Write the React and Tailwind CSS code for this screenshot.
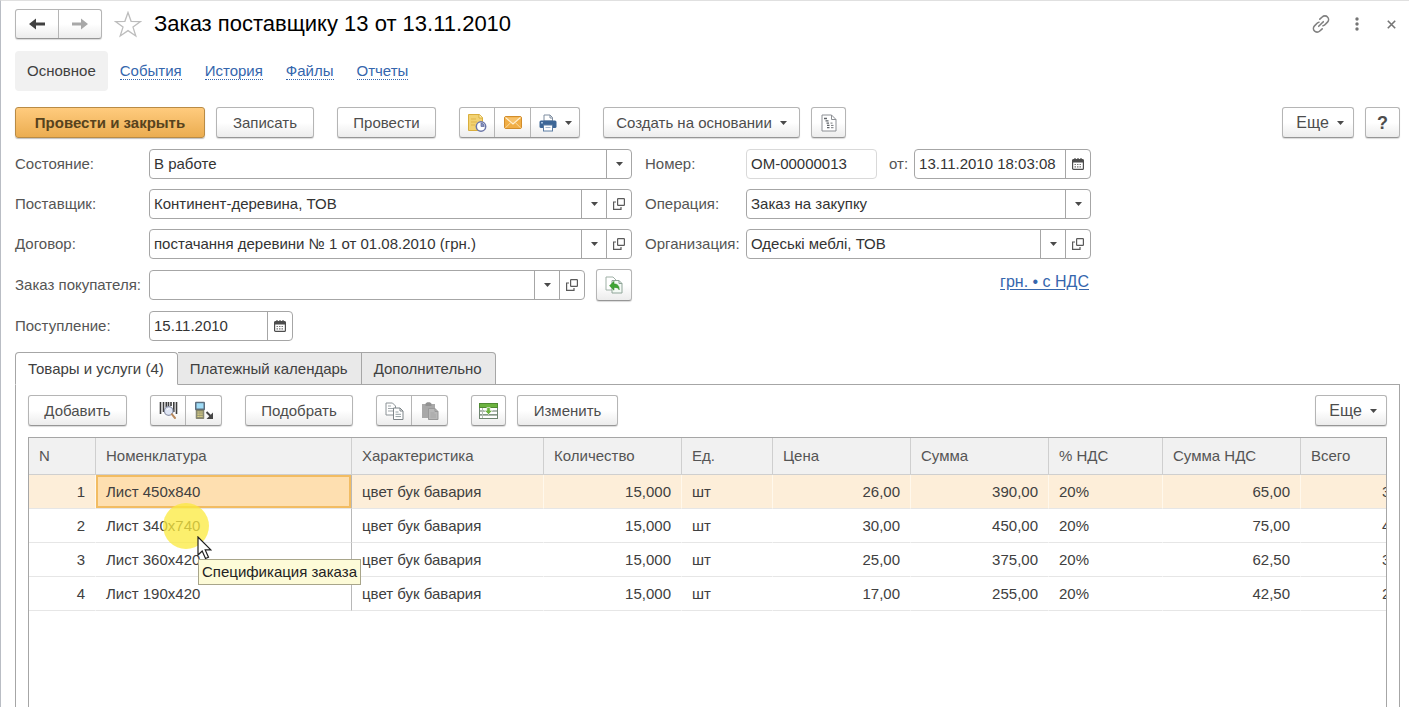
import React, { useState } from "react";
import clsx from "clsx";

const lines = [
  { name: "Лист 450x840", kind: "цвет бук бавария", qty: "15,000", unit: "шт", price: "26,00", sum: "390,00", vat: "20%", vatSum: "65,00", total: "390,00" },
  { name: "Лист 340x740", kind: "цвет бук бавария", qty: "15,000", unit: "шт", price: "30,00", sum: "450,00", vat: "20%", vatSum: "75,00", total: "450,00" },
  { name: "Лист 360x420", kind: "цвет бук бавария", qty: "15,000", unit: "шт", price: "25,00", sum: "375,00", vat: "20%", vatSum: "62,50", total: "375,00" },
  { name: "Лист 190x420", kind: "цвет бук бавария", qty: "15,000", unit: "шт", price: "17,00", sum: "255,00", vat: "20%", vatSum: "42,50", total: "255,00" },
];

const columns = [
  { key: "n", title: "N", width: "w-[67px]", right: true },
  { key: "name", title: "Номенклатура", width: "w-[256px]" },
  { key: "kind", title: "Характеристика", width: "w-[192px]" },
  { key: "qty", title: "Количество", width: "w-[138px]", right: true },
  { key: "unit", title: "Ед.", width: "w-[91px]" },
  { key: "price", title: "Цена", width: "w-[138px]", right: true },
  { key: "sum", title: "Сумма", width: "w-[138px]", right: true },
  { key: "vat", title: "% НДС", width: "w-[114px]" },
  { key: "vatSum", title: "Сумма НДС", width: "w-[138px]", right: true },
  { key: "total", title: "Всего", width: "w-[138px]", right: true },
];

const tabs = ["Товары и услуги (4)", "Платежный календарь", "Дополнительно"];

/* ---------- icons ---------- */

const Caret = () => (
  <svg width="7" height="4" viewBox="0 0 7 4" className="shrink-0">
    <path d="M0 0h7L3.5 4z" fill="#4a4a4a" />
  </svg>
);

const ArrowIcon = ({ color, flip }) => (
  <svg width="18" height="12" viewBox="0 0 18 12" className={flip ? "rotate-180" : ""}>
    <path d="M8 0.500L1 6l7 5.500V7.600H17V4.400H8z" fill={color} />
  </svg>
);

const StarIcon = () => (
  <svg width="28" height="27" viewBox="0 0 28 27">
    <path d="M14 1.500l3.100 8.800 9.400.2-7.500 5.600 2.800 8.900L14 19.600l-7.800 5.400L9 16.100 1.500 10.500l9.400-.2z" fill="#fff" stroke="#bdbdbd" strokeWidth="1.300" />
  </svg>
);

const LinkIcon = () => (
  <svg width="20" height="20" viewBox="0 0 20 20" fill="none" stroke="#808080" strokeWidth="1.600" strokeLinecap="round">
    <path d="M8.800 5.200l2.400-2.200c1.600-1.500 4-1.400 5.300 0 1.400 1.400 1.400 3.700 0 5.100l-2.600 2.700c-.6.6-1.200.9-1.900 1" />
    <path d="M11.200 14.800l-2.400 2.200c-1.600 1.500-4 1.400-5.300 0-1.400-1.400-1.400-3.700 0-5.100l2.600-2.700c.6-.6 1.200-.9 1.900-1" />
    <path d="M7.700 12.300l4.600-4.600" />
  </svg>
);

const DotsIcon = () => (
  <svg width="4" height="14" viewBox="0 0 4 14" fill="#757575">
    <circle cx="2" cy="2" r="1.700" />
    <circle cx="2" cy="7" r="1.700" />
    <circle cx="2" cy="12" r="1.700" />
  </svg>
);

const CloseIcon = () => (
  <svg width="9" height="9" viewBox="0 0 9 9" stroke="#757575" strokeWidth="1.600">
    <path d="M.8.8l7.400 7.400M8.200.8L.8 8.200" />
  </svg>
);

const DocClockIcon = () => (
  <svg width="20" height="20" viewBox="0 0 20 20">
    <path d="M1.500 1.500h11l3 3v13h-14z" fill="#f2d272" stroke="#d9ae3d" />
    <path d="M12 1.500v3.500h3.500" fill="#fff3c4" stroke="#d9ae3d" />
    <path d="M4 6h5M4 9h6M4 12h4" stroke="#e0b54a" />
    <circle cx="14" cy="13.500" r="4.700" fill="#fff" stroke="#6b76a8" strokeWidth="1.500" />
    <path d="M14 10v3.500h3.200A3.400 3.400 0 0 0 14 10z" fill="#8892bd" stroke="#5c689e" strokeWidth=".7" />
  </svg>
);

const MailIcon = () => (
  <svg width="18" height="13" viewBox="0 0 18 13">
    <rect x=".5" y=".5" width="17" height="12" rx="1.500" fill="#f1ae45" stroke="#d28d2b" />
    <path d="M1.500 1.500L9 8l7.500-6.500" fill="#f7c16a" stroke="#fff1d3" strokeWidth="1.100" />
    <path d="M1.500 11.800l5-5M16.500 11.800l-5-5" stroke="#fbdca4" />
  </svg>
);

const PrinterIcon = () => (
  <svg width="18" height="18" viewBox="0 0 18 18">
    <path d="M5 7V1h6l2.500 2.500V7z" fill="#fff" stroke="#7f8da0" />
    <path d="M11 1v3h2.500" fill="none" stroke="#7f8da0" />
    <rect x=".5" y="6.500" width="17" height="7.500" rx="1.500" fill="#3d6696" />
    <rect x="2" y="8" width="2" height="1.500" fill="#a9c3e0" />
    <rect x="4.500" y="11" width="9" height="6" fill="#fff" stroke="#5b7ca3" />
    <path d="M6.500 13.500h5" stroke="#a5b6cb" />
  </svg>
);

const ReportIcon = () => (
  <svg width="16" height="18" viewBox="0 0 16 18" fill="none">
    <path d="M1 1h9.500L15 5.500V17H1z" fill="#fff" stroke="#8c8f94" />
    <path d="M10.500 1v4.500H15" stroke="#8c8f94" />
    <path d="M3 4.500h3M4.500 6.800h3M5.500 9.100h2.500M6 11.400h2.500M6 13.700h2.500" stroke="#5f6368" strokeWidth="1.300" />
    <path d="M9.500 9.100h2M10 11.400h2.500M10 13.700h2.500" stroke="#74777b" />
  </svg>
);

const OpenIcon = () => (
  <svg width="12" height="12" viewBox="0 0 12 12" fill="none" stroke="#5a5a5a" strokeWidth="1.200">
    <rect x="4.600" y=".6" width="6.800" height="6.800" rx=".6" />
    <path d="M3 4H.6v7.400H8V9" />
  </svg>
);

const CalendarIcon = () => (
  <svg width="12" height="12" viewBox="0 0 12 12">
    <rect x=".6" y="1.600" width="10.800" height="9.800" rx="1" fill="#fff" stroke="#4d4d4d" strokeWidth="1.200" />
    <path d="M.6 1.600h10.800v3H.6z" fill="#4d4d4d" />
    <path d="M3 0v3M6 0v3M9 0v3" stroke="#4d4d4d" strokeWidth="1.200" />
    <path d="M2.500 6.500h7M2.500 8.800h7" stroke="#777" strokeWidth="1.200" strokeDasharray="1.500 1" />
  </svg>
);

const FillFromIcon = () => (
  <svg width="18" height="18" viewBox="0 0 18 18">
    <path d="M1 1h7l3 3v10H1z" fill="#fff" stroke="#9fb0a6" />
    <path d="M7 4.500h7l3 3V17H7z" fill="#f4faf5" stroke="#8fa598" />
    <path d="M14 4.500v3h3" fill="none" stroke="#8fa598" />
    <path d="M4.500 9.800l4.500-4.500v2.600c3.600 0 5.400 1.900 5.200 6-.8-1.900-2.300-2.600-5.200-2.500v2.800z" fill="#3fa535" stroke="#2c8425" strokeWidth=".5" />
  </svg>
);

const BarcodeIcon = () => (
  <svg width="19" height="19" viewBox="0 0 19 19">
    <path d="M1.500 1v12M4.500 1v10M7.300 1v5M9.500 1v4M12 1v4M14.800 1v10M17.500 1v12" stroke="#3c3c3c" strokeWidth="1.600" />
    <circle cx="9.700" cy="10" r="4.300" fill="#dfe6f5" stroke="#8d93a8" strokeWidth="1.200" />
    <path d="M8 9a2.200 2.200 0 0 1 2.500-1.300" fill="none" stroke="#fff" />
    <path d="M12.800 13.200l3.200 3.800" stroke="#b98a5d" strokeWidth="2" strokeLinecap="round" />
  </svg>
);

const TerminalIcon = () => (
  <svg width="20" height="19" viewBox="0 0 20 19">
    <rect x="1" y=".8" width="10" height="8.500" rx="1" fill="#5c6f80" />
    <rect x="2.500" y="2.200" width="7" height="5.300" fill="#9fdcf7" />
    <path d="M2.200 9h7.600v8.500H2.200z" fill="#8f8f72" stroke="#6c6c55" strokeWidth=".7" />
    <path d="M3.500 11h5M3.500 13.200h5M3.500 15.400h5" stroke="#f0e28a" strokeWidth="1.200" strokeDasharray="1.300 .6" />
    <path d="M12.500 11l4 4" stroke="#444" strokeWidth="2" />
    <path d="M19 11.500V18h-6.500z" fill="#444" />
  </svg>
);

const CopyIcon = () => (
  <svg width="19" height="18" viewBox="0 0 19 18">
    <path d="M1 1h6.500L10.500 4v9H1z" fill="#fff" stroke="#8b9296" />
    <path d="M3 4h3M3 6.500h5M3 9h5" stroke="#a0a7ab" />
    <path d="M8.500 6H15l3 3v8.500H8.500z" fill="#fff" stroke="#7d8488" />
    <path d="M15 6v3h3" fill="none" stroke="#7d8488" />
    <path d="M10.500 10h3M10.500 12.300h5.500M10.500 14.600h5.500" stroke="#94a0a4" />
  </svg>
);

const PasteIcon = () => (
  <svg width="18" height="18" viewBox="0 0 18 18">
    <path d="M1 2h13v14H1z" fill="#a8a8a8" />
    <path d="M4.500 2c0-2.200 6-2.200 6 0v2h-6z" fill="#929292" />
    <path d="M7.500 6.500H14l3 3v8H7.500z" fill="#b8b8b8" stroke="#999" />
    <path d="M14 6.500v3h3" fill="none" stroke="#999" />
    <path d="M9.500 11h4M9.500 13h5.500M9.500 15h5.500" stroke="#9f9f9f" strokeWidth=".7" />
  </svg>
);

const TableDownIcon = () => (
  <svg width="19" height="16" viewBox="0 0 19 16">
    <rect x=".5" y=".5" width="18" height="15" fill="#fff" stroke="#6f8571" />
    <rect x=".5" y=".5" width="18" height="4" fill="#6cb33f" stroke="#4f8a33" />
    <path d="M1 8h17M1 11.800h17" stroke="#5e7561" strokeWidth="1.200" />
    <path d="M3.500 5v10" stroke="#b4c0b5" />
    <path d="M7.800 4.500h3.400v3h2.300L9.500 11.500l-4-4h2.300z" fill="#6cb33f" stroke="#fff" strokeWidth=".6" />
  </svg>
);

const CursorIcon = () => (
  <svg width="15" height="24" viewBox="0 0 15 24">
    <path d="M1 1v18l4.200-4 3.300 7.500 3-1.300-3.300-7.300h5.600z" fill="#fff" stroke="#1f1f1f" strokeWidth="1.200" />
  </svg>
);

/* ---------- controls ---------- */

const face = "bg-gradient-to-b from-white from-50% to-[#ececec] border-[#b5b5b5] border-b-[#969696]";

const Button = ({ className, children, ...rest }) => (
  <button
    type="button"
    className={clsx("flex items-center justify-center rounded-[3px] border text-[#4d4d4d] shadow-[0_1px_1px_rgba(0,0,0,0.15)]", face, className)}
    {...rest}
  >
    {children}
  </button>
);

// several icon buttons glued into one frame
const ButtonGroup = ({ className, children }) => (
  <div className={clsx("flex divide-x divide-[#b5b5b5] rounded-[3px] border shadow-[0_1px_1px_rgba(0,0,0,0.15)]", face, className)}>
    {children}
  </div>
);

const GroupItem = ({ className, children, ...rest }) => (
  <button type="button" className={clsx("flex items-center justify-center", className || "w-[35px]")} {...rest}>
    {children}
  </button>
);

const Field = ({ id, value, buttons = [], pale, className }) => {
  const [text, setText] = useState(value);
  return (
    <div className={clsx("flex h-[30px] min-w-0 overflow-hidden rounded-[4px] border bg-white", pale ? "border-[#d9d9d9]" : "border-[#a6a6a6]", className)}>
      <input id={id} value={text} onChange={(e) => setText(e.target.value)} className="min-w-0 flex-1 pl-1 text-[#333] outline-none" />
      {buttons.map((b) => (
        <button key={b} type="button" aria-label={b} className="flex w-[25px] shrink-0 items-center justify-center border-l border-[#a6a6a6]">
          {b === "Выбрать" && <Caret />}
          {b === "Открыть" && <OpenIcon />}
          {b === "Календарь" && <CalendarIcon />}
        </button>
      ))}
    </div>
  );
};

const SelectField = ({ id, options, className }) => (
  <div className={clsx("relative flex h-[30px] min-w-0 rounded-[4px] border border-[#a6a6a6] bg-white", className)}>
    <select id={id} className="w-full appearance-none bg-transparent pr-7 pl-1 text-[#333] outline-none">
      {options.map((o) => (
        <option key={o}>{o}</option>
      ))}
    </select>
    <span className="pointer-events-none absolute inset-y-0 right-0 flex w-[25px] items-center justify-center border-l border-[#a6a6a6]">
      <Caret />
    </span>
  </div>
);

const Label = ({ htmlFor, className, children }) => (
  <label htmlFor={htmlFor} className={clsx("shrink-0 whitespace-nowrap text-[#555]", className)}>
    {children}
  </label>
);

/* ---------- page parts ---------- */

const Header = () => (
  <header className="flex items-center pt-[7px]">
    <ButtonGroup className="h-[30px]">
      <GroupItem className="w-[43px]" aria-label="Назад"><ArrowIcon color="#404040" /></GroupItem>
      <GroupItem className="w-[42px]" aria-label="Вперед"><ArrowIcon color="#a8a8a8" flip /></GroupItem>
    </ButtonGroup>
    <button type="button" aria-label="В избранное" className="ml-3"><StarIcon /></button>
    <h1 className="ml-3 text-[22px] leading-8 text-black">Заказ поставщику 13 от 13.11.2010</h1>
    <div className="ml-auto flex items-center gap-6 pr-1">
      <button type="button" aria-label="Ссылка"><LinkIcon /></button>
      <button type="button" aria-label="Меню"><DotsIcon /></button>
      <button type="button" aria-label="Закрыть" className="ml-1"><CloseIcon /></button>
    </div>
  </header>
);

const Sections = () => (
  <nav className="mt-[11px] flex items-center">
    <span className="rounded-[4px] bg-[#f1f1f1] px-3 text-[#404040] leading-10">Основное</span>
    <div className="ml-3 flex gap-[23px]">
      {["События", "История", "Файлы", "Отчеты"].map((s) => (
        <a key={s} href="#" className="border-b border-dotted border-[#3566ad] leading-4 text-[#3566ad]">{s}</a>
      ))}
    </div>
  </nav>
);

const CommandBar = () => (
  <div className="mt-4 flex h-[31px] items-stretch gap-[23px]">
    <div className="flex gap-[11px]">
      <button
        type="button"
        className="w-[190px] rounded-[3px] border border-[#b98b45] bg-gradient-to-b from-[#ffcb7d] to-[#ebad50] font-bold text-[#57431d] shadow-[0_1px_1px_rgba(0,0,0,0.25)]"
      >
        Провести и закрыть
      </button>
      <Button className="w-[98px]">Записать</Button>
    </div>
    <Button className="w-[99px]">Провести</Button>
    <ButtonGroup>
      <GroupItem aria-label="Напоминание"><DocClockIcon /></GroupItem>
      <GroupItem className="w-9" aria-label="Письмо"><MailIcon /></GroupItem>
      <GroupItem className="w-12 gap-2" aria-label="Печать"><PrinterIcon /><Caret /></GroupItem>
    </ButtonGroup>
    <div className="flex gap-[11px]">
      <Button className="w-[197px] gap-2">Создать на основании <Caret /></Button>
      <Button className="w-[35px]" aria-label="Отчет"><ReportIcon /></Button>
    </div>
    <div className="ml-auto flex gap-[11px]">
      <Button className="w-[72px] gap-2 pl-1 text-base">Еще <Caret /></Button>
      <Button className="w-[35px] text-lg font-bold" aria-label="Справка">?</Button>
    </div>
  </div>
);

const Details = () => (
  <div className="mt-[11px] flex gap-[13px]">
    <div className="flex w-full max-w-[617px] flex-col gap-[10px]">
      <div className="flex items-center">
        <Label htmlFor="state" className="w-[134px]">Состояние:</Label>
        <SelectField id="state" options={["В работе", "Завершен"]} className="flex-1" />
      </div>
      <div className="flex items-center">
        <Label htmlFor="supplier" className="w-[134px]">Поставщик:</Label>
        <Field id="supplier" value="Континент-деревина, ТОВ" buttons={["Выбрать", "Открыть"]} className="flex-1" />
      </div>
      <div className="flex items-center">
        <Label htmlFor="contract" className="w-[134px]">Договор:</Label>
        <Field id="contract" value="постачання деревини № 1 от 01.08.2010 (грн.)" buttons={["Выбрать", "Открыть"]} className="flex-1" />
      </div>
      <div className="flex items-center">
        <Label htmlFor="order" className="w-[134px]">Заказ покупателя:</Label>
        <Field id="order" value="" buttons={["Выбрать", "Открыть"]} className="flex-1" />
        <Button className="ml-[11px] h-8 w-9" aria-label="Заполнить"><FillFromIcon /></Button>
      </div>
      <div className="flex items-center">
        <Label htmlFor="arrival" className="w-[134px]">Поступление:</Label>
        <Field id="arrival" value="15.11.2010" buttons={["Календарь"]} className="w-36" />
      </div>
    </div>

    <div className="flex w-full max-w-[446px] flex-col gap-[10px]">
      <div className="flex items-center">
        <Label htmlFor="number" className="w-[101px]">Номер:</Label>
        <Field id="number" value="ОМ-00000013" pale className="w-[131px]" />
        <Label htmlFor="date" className="ml-3">от:</Label>
        <Field id="date" value="13.11.2010 18:03:08" buttons={["Календарь"]} className="ml-[6px] flex-1" />
      </div>
      <div className="flex items-center">
        <Label htmlFor="operation" className="w-[101px]">Операция:</Label>
        <SelectField id="operation" options={["Заказ на закупку", "Заказ на переработку"]} className="flex-1" />
      </div>
      <div className="flex items-center">
        <Label htmlFor="company" className="w-[101px]">Организация:</Label>
        <Field id="company" value="Одеські меблі, ТОВ" buttons={["Выбрать", "Открыть"]} className="flex-1" />
      </div>
      <a href="#" className="mt-[3px] self-end pr-[2px] text-base leading-5 text-[#3566ad] underline underline-offset-2">грн. • с НДС</a>
    </div>
  </div>
);

const TableBar = () => (
  <div className="flex h-[31px] items-stretch gap-[23px]">
    <Button className="w-[99px]">Добавить</Button>
    <ButtonGroup>
      <GroupItem aria-label="Поиск по штрихкоду"><BarcodeIcon /></GroupItem>
      <GroupItem aria-label="Загрузить из терминала"><TerminalIcon /></GroupItem>
    </ButtonGroup>
    <Button className="w-[108px]">Подобрать</Button>
    <ButtonGroup>
      <GroupItem aria-label="Копировать"><CopyIcon /></GroupItem>
      <GroupItem aria-label="Вставить"><PasteIcon /></GroupItem>
    </ButtonGroup>
    <div className="flex gap-[11px]">
      <Button className="w-[35px]" aria-label="Заполнить таблицу"><TableDownIcon /></Button>
      <Button className="w-[101px]">Изменить</Button>
    </div>
    <Button className="ml-auto w-[72px] gap-2 pl-1 text-base">Еще <Caret /></Button>
  </div>
);

const LinesTable = () => (
  <div className="relative mt-[11px] flex-1 overflow-hidden border border-b-0 border-[#a6a6a6]">
    <table className="w-[1410px] table-fixed border-separate border-spacing-0">
      <thead>
        <tr className="h-[37px] bg-[#f1f1f1] text-left text-[#555]">
          {columns.map((c) => (
            <th key={c.key} scope="col" className={clsx("border-r border-b border-[#cfcfcf] px-[10px] py-0 font-normal", c.width)}>
              {c.title}
            </th>
          ))}
        </tr>
      </thead>
      <tbody>
        {lines.map((line, i) => (
          <tr key={line.name} className={clsx("h-[34px] text-[#404040]", i === 0 && "bg-[#fdeed9]")}>
            {columns.map((c) => (
              <td
                key={c.key}
                className={clsx(
                  "border-r border-b border-b-[#e6e6e6] px-[10px] py-0",
                  c.right && "text-right",
                  c.key === "name" ? "border-r-[#b8b8b8]" : i === 0 ? "border-r-[#fff8ec]" : "border-r-transparent",
                  c.key === "name" && i === 0 && "bg-[#fedfb0] shadow-[inset_0_0_0_2px_#f2bc62]"
                )}
              >
                {c.key === "n" ? i + 1 : line[c.key]}
              </td>
            ))}
          </tr>
        ))}
      </tbody>
    </table>

    {/* pointer with its highlight and hint */}
    <div className="pointer-events-none absolute top-[65px] left-[134px] size-[46px] rounded-full bg-[#fbe93c]/75" />
    <div className="pointer-events-none absolute top-[121px] left-[169px] border border-[#a8a58a] bg-[#fdfbd8] px-[3px] leading-6 whitespace-nowrap text-[#222]">
      Спецификация заказа
    </div>
    <div className="pointer-events-none absolute top-[98px] left-[168px]"><CursorIcon /></div>
  </div>
);

const App = () => {
  const [active, setActive] = useState(0);

  return (
    <div className="flex min-h-screen flex-col overflow-hidden border-t border-l border-t-[#e0e0e0] border-l-[#b9bdc4] bg-white pr-[9px] pl-[14px] font-['Liberation_Sans',Arial,sans-serif] text-[15px] leading-5">
      <Header />
      <Sections />
      <CommandBar />
      <Details />

      <div role="tablist" className="relative z-10 mt-[11px] flex">
        {tabs.map((t, i) => (
          <button
            key={t}
            type="button"
            role="tab"
            aria-selected={i === active}
            onClick={() => setActive(i)}
            className={clsx(
              "-mb-px h-[33px] border border-[#a6a6a6] pr-[13px] pl-3 text-[#404040]",
              i === active ? "rounded-t-[4px] border-b-white bg-white" : "border-l-0 bg-[#e9e9e9]",
              i === tabs.length - 1 && "rounded-tr-[4px]"
            )}
          >
            {t}
          </button>
        ))}
      </div>
      <div className="flex flex-1 flex-col border border-b-0 border-[#a6a6a6] px-3 pt-[10px]">
        <TableBar />
        <LinesTable />
      </div>
    </div>
  );
};

export default App;
